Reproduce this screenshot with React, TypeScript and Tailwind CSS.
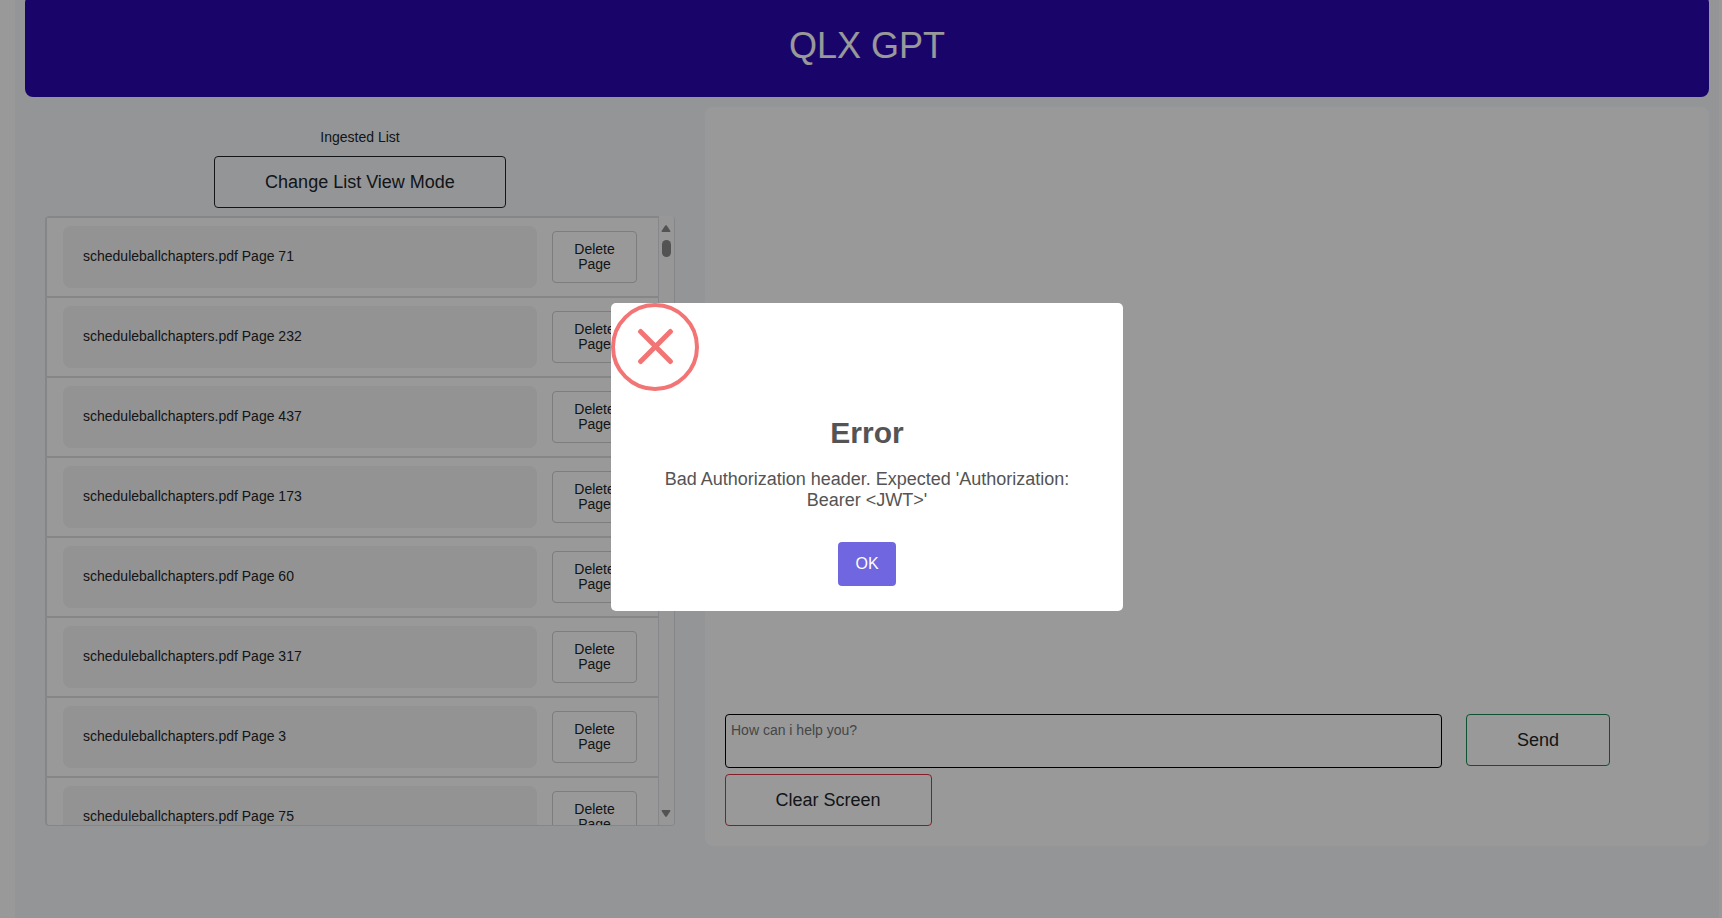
const pages = [71, 232, 437, 173, 60, 317, 3, 75];

function ListRow({ page }: { page: number }) {
  return (
    <li className="flex h-20 shrink-0 items-center border-t-2 border-[#dee0e2] pl-4">
      <div className="flex h-[62px] w-[474px] items-center rounded-lg bg-[#f5f5f5] pb-[2px] pl-5 text-sm text-[#212529]">
        scheduleballchapters.pdf Page {page}
      </div>
      <button className="ml-[15px] h-[52px] w-[85px] rounded border border-[#ced0d2] px-4 text-sm leading-[15.4px] text-[#212529]">
        Delete Page
      </button>
    </li>
  );
}

function ScrollTrack() {
  return (
    <div className="flex w-[16px] shrink-0 flex-col items-center justify-between border-l border-[#dee2e6] bg-[#fcfcfc] pb-2 pr-px pt-[9px]">
      <div className="flex flex-col items-center gap-2">
        <svg width="10" height="7" viewBox="0 0 10 7" fill="#8b8b8b">
          <path d="M4.2.5Q5-.2 5.800.5L9.400 6Q9.500 7 8.800 7H1.200Q.5 7 .6 6Z" />
        </svg>
        <div className="h-[17px] w-[9px] rounded-full bg-[#8b8b8b]" />
      </div>
      <svg width="10" height="7" viewBox="0 0 10 7" fill="#8b8b8b">
        <path d="M4.2 6.500Q5 7.200 5.800 6.500L9.400 1Q9.500 0 8.800 0H1.200Q.5 0 .6 1Z" />
      </svg>
    </div>
  );
}

function ErrorDialog() {
  return (
    <div className="fixed inset-0 bg-black/40 pl-[611px] pt-[303px]">
      <div className="flex h-[308px] w-[512px] flex-col items-center rounded-[5px] bg-white">
        <svg className="self-start" width="88" height="88" viewBox="0 0 88 88" fill="#f27474">
          <circle cx="44" cy="44" r="42" fill="none" stroke="#f27474" strokeWidth="4" />
          <rect x="21" y="41" width="47" height="5" rx="2" transform="rotate(45 44.5 43.5)" />
          <rect x="21" y="41" width="47" height="5" rx="2" transform="rotate(-45 44.5 43.5)" />
        </svg>
        <h2 className="mt-[24px] text-[30px] font-bold leading-[36px] text-[#545454]">Error</h2>
        <p className="mt-[18px] w-[432px] text-center text-[18px] leading-[21px] text-[#545454]">
          Bad Authorization header. Expected 'Authorization: Bearer &lt;JWT&gt;'
        </p>
        <button className="mt-[31px] h-11 w-[58px] rounded bg-[#7066e0] text-[16px] leading-6 text-white">OK</button>
      </div>
    </div>
  );
}

export default function App() {
  return (
    <div className="h-[918px] overflow-hidden bg-white pl-[15px] pr-[3px] font-['Liberation_Sans',Arial,sans-serif] text-[#212529]">
      <div className="flex h-full flex-col bg-[#f7f9fc] pl-[10px] pr-[10px]">
        <header className="-mt-[5px] flex h-[102px] shrink-0 items-center justify-center rounded-lg bg-[#2a08b1] text-[36px] leading-[54px] text-white">
          QLX GPT
        </header>
        <div className="flex">
          <section className="flex w-[680px] flex-col items-center pl-[20px] pr-[30px] pt-[30px]">
            <div className="text-sm leading-5">Ingested List</div>
            <button className="mt-[9px] h-[52px] w-[292px] rounded border border-[#212529] text-[18px]">
              Change List View Mode
            </button>
            <div className="mt-2 flex h-[610px] w-full overflow-hidden rounded border-b border-l-2 border-r border-[#dee0e2] bg-white">
              <ul className="flex min-w-0 flex-1 flex-col overflow-hidden">
                {pages.map((page) => (
                  <ListRow key={page} page={page} />
                ))}
              </ul>
              <ScrollTrack />
            </div>
          </section>
          <main className="mt-[10px] flex h-[739px] flex-1 flex-col justify-end rounded-lg bg-white px-5 pb-5">
            <div className="flex gap-6">
              <textarea
                className="h-[54px] w-[717px] resize-none rounded border border-black px-[5px] py-[5px] text-sm leading-5 placeholder:text-[#757575]"
                placeholder="How can i help you?"
              />
              <button className="h-[52px] w-[144px] rounded border border-[#198754] text-[18px]">Send</button>
            </div>
            <button className="mt-[6px] h-[52px] w-[207px] rounded border border-[#dc3545] pr-px text-[18px]">
              Clear Screen
            </button>
          </main>
        </div>
      </div>
      <ErrorDialog />
    </div>
  );
}
